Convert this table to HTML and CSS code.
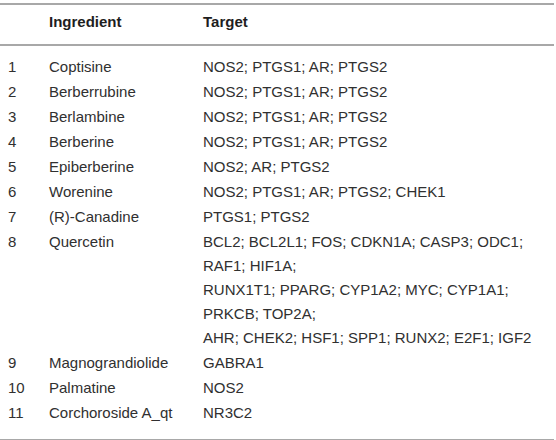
FILE: index.html
```html
<!DOCTYPE html>
<html>
<head>
<meta charset="utf-8">
<link rel="stylesheet" href="styles.css">
</head>
<body>
<table class="data">
  <thead>
    <tr>
      <th class="c-num"></th>
      <th class="c-ing">Ingredient</th>
      <th class="c-tgt">Target</th>
    </tr>
  </thead>
  <tbody>
    <tr class="first"><td class="c-num">1</td><td class="c-ing">Coptisine</td><td class="c-tgt">NOS2; PTGS1; AR; PTGS2</td></tr>
    <tr><td class="c-num">2</td><td class="c-ing">Berberrubine</td><td class="c-tgt">NOS2; PTGS1; AR; PTGS2</td></tr>
    <tr><td class="c-num">3</td><td class="c-ing">Berlambine</td><td class="c-tgt">NOS2; PTGS1; AR; PTGS2</td></tr>
    <tr><td class="c-num">4</td><td class="c-ing">Berberine</td><td class="c-tgt">NOS2; PTGS1; AR; PTGS2</td></tr>
    <tr><td class="c-num">5</td><td class="c-ing">Epiberberine</td><td class="c-tgt">NOS2; AR; PTGS2</td></tr>
    <tr><td class="c-num">6</td><td class="c-ing">Worenine</td><td class="c-tgt">NOS2; PTGS1; AR; PTGS2; CHEK1</td></tr>
    <tr><td class="c-num">7</td><td class="c-ing">(R)-Canadine</td><td class="c-tgt">PTGS1; PTGS2</td></tr>
    <tr><td class="c-num">8</td><td class="c-ing">Quercetin</td><td class="c-tgt">BCL2; BCL2L1; FOS; CDKN1A; CASP3; ODC1;<br>RAF1; HIF1A;<br>RUNX1T1; PPARG; CYP1A2; MYC; CYP1A1;<br>PRKCB; TOP2A;<br>AHR; CHEK2; HSF1; SPP1; RUNX2; E2F1; IGF2</td></tr>
    <tr><td class="c-num">9</td><td class="c-ing">Magnograndiolide</td><td class="c-tgt">GABRA1</td></tr>
    <tr><td class="c-num">10</td><td class="c-ing">Palmatine</td><td class="c-tgt">NOS2</td></tr>
    <tr class="last"><td class="c-num">11</td><td class="c-ing">Corchoroside A_qt</td><td class="c-tgt">NR3C2</td></tr>
  </tbody>
</table>
</body>
</html>
```
FILE: styles.css
```css
html, body {
  margin: 0;
  padding: 0;
  background: #ffffff;
}
body {
  font-family: "Liberation Sans", Arial, sans-serif;
  font-size: 15px;
  color: #303030;
}
.data {
  width: 554px;
  margin-top: 3px;
  border-collapse: collapse;
  border-spacing: 0;
  line-height: 24px;
}
.data th {
  text-align: left;
  font-weight: bold;
  color: #1e1e1e;
  padding: 5px 0 10px 0;
  border-top: 2px solid #a8a8a8;
  border-bottom: 2px solid #a8a8a8;
}
.data td {
  padding: 1px 0 0 0;
  vertical-align: top;
}
.data tr.first td {
  padding-top: 9px;
}
.data tr.last td {
  padding-bottom: 14px;
  border-bottom: 2px solid #a8a8a8;
}
.c-num {
  width: 41px;
  padding-left: 8px !important;
}
.c-ing {
  width: 154px;
}
```
